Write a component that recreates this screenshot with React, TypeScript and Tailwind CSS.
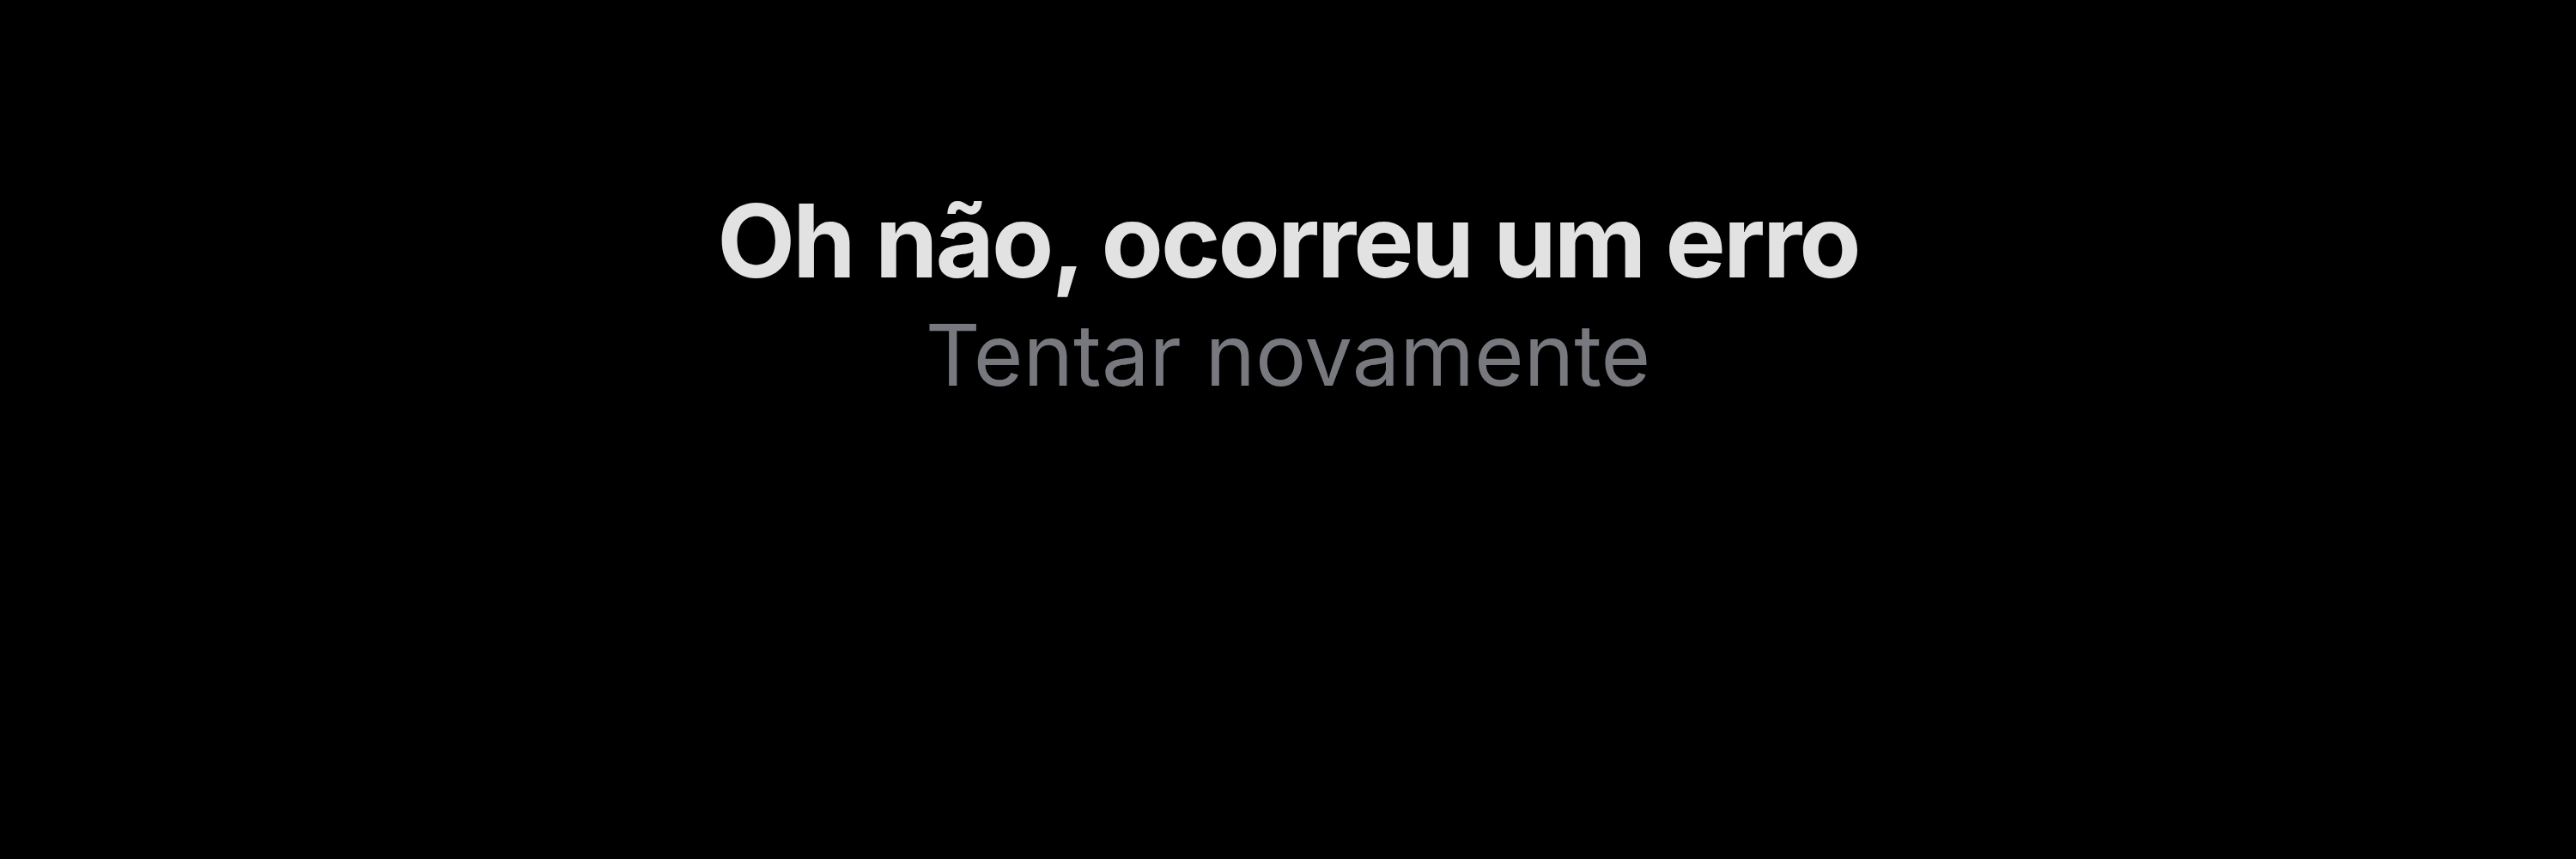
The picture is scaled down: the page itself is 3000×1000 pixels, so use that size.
export default function App() {
  return (
    <div className="w-[3000px] h-[1000px] bg-black flex flex-col items-center pt-[221px] font-['Inter',sans-serif]">
      <h1 className="text-[118px] leading-none font-bold text-[#e2e2e2] tracking-[-2.9px]">
        Oh não, ocorreu um erro
      </h1>
      <button className="mt-[25px] text-[99px] leading-none font-normal text-[#77797e]">
        Tentar novamente
      </button>
    </div>
  )
}
